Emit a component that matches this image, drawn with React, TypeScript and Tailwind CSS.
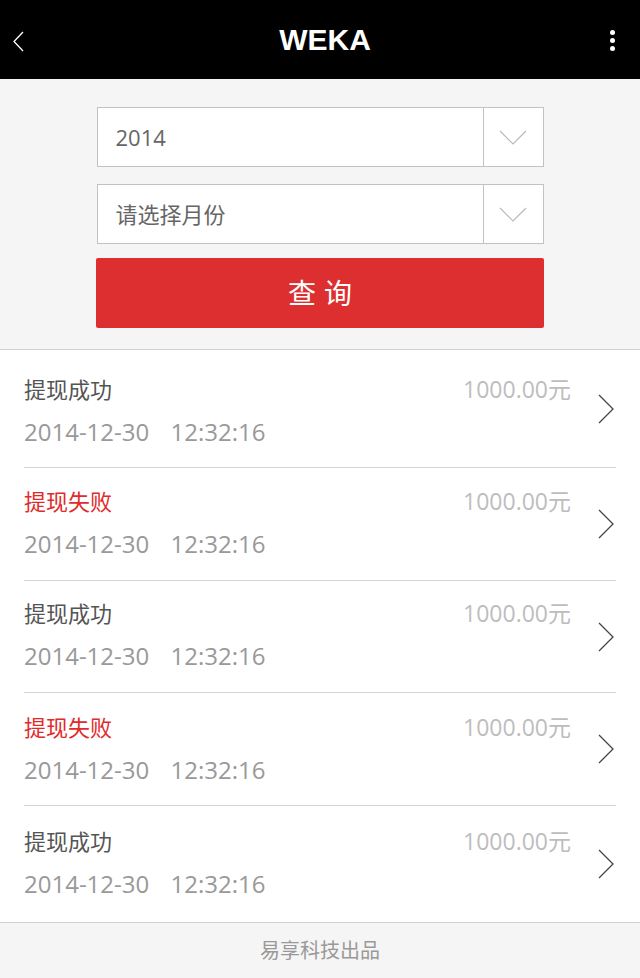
const records = [
  { ok: true, h: "h-[118px]", pt: "pt-[24px]" },
  { ok: false, h: "h-[113px]", pt: "pt-[18px]" },
  { ok: true, h: "h-[112px]", pt: "pt-[17px]" },
  { ok: false, h: "h-[113px]", pt: "pt-[19px]" },
  { ok: true, h: "h-[116px]", pt: "pt-[20px]" },
];

const Chevron = ({ className }: { className: string }) => (
  <svg className={className} viewBox="0 0 16 30" fill="none">
    <path d="M1 1 L15 15 L1 29" stroke="currentColor" strokeWidth="1.3" />
  </svg>
);

const SelectBox = ({ label }: { label: string }) => (
  <div className="flex h-[60px] w-[447px] border border-[#c2c2c2] bg-white">
    <div className="flex flex-1 items-center pl-[18px] text-[22px] text-[#666]">{label}</div>
    <div className="flex w-[60px] items-center justify-center border-l border-[#c2c2c2]">
      <svg width="28" height="15" viewBox="0 0 28 15" fill="none">
        <path d="M1 1 L14 14 L27 1" stroke="#b8b8b8" strokeWidth="1.2" />
      </svg>
    </div>
  </div>
);

export default function App() {
  return (
    <div className="flex h-[978px] w-full flex-col bg-white font-['Open_Sans','Noto_Sans_CJK_SC',sans-serif]">
      <header className="relative flex h-[79px] items-center justify-center bg-black pl-[10px]">
        <svg className="absolute left-[13px] top-[31px]" width="11" height="21" viewBox="0 0 11 21" fill="none">
          <path d="M10 1 L1 10.5 L10 20" stroke="white" strokeWidth="1.3" />
        </svg>
        <h1 className="font-['Liberation_Sans',sans-serif] text-[30px] font-bold text-white">WEKA</h1>
        <div className="absolute right-[25px] top-[30px] flex flex-col gap-[3px]">
          <span className="h-[5px] w-[5px] rounded-full bg-white" />
          <span className="h-[5px] w-[5px] rounded-full bg-white" />
          <span className="h-[5px] w-[5px] rounded-full bg-white" />
        </div>
      </header>

      <section className="flex h-[271px] flex-col items-center border-b border-[#d2d2d2] bg-[#f5f5f5] pt-[28px]">
        <SelectBox label="2014" />
        <div className="mt-[17px]">
          <SelectBox label="请选择月份" />
        </div>
        <button className="mt-[14px] h-[70px] w-[448px] rounded-[2px] bg-[#de2f30] pl-[8px] text-[28px] tracking-[8px] text-white">
          查询
        </button>
      </section>

      <ul className="flex flex-col">
        {records.map((r, i) => (
          <li
            key={i}
            className={`${r.h} relative mx-[24px] ${i < records.length - 1 ? "border-b border-[#d4d4d4]" : ""}`}
          >
            <div className={`flex items-start justify-between pr-[45px] ${r.pt}`}>
              <div className="flex flex-col">
                <span className={`h-[30px] text-[22px] leading-[30px] ${r.ok ? "text-[#555]" : "text-[#e12b2b]"}`}>
                  {r.ok ? "提现成功" : "提现失败"}
                </span>
                <span className="mt-[13px] h-[30px] text-[24px] leading-[30px] text-[#999] [word-spacing:15px]">
                  2014-12-30 12:32:16
                </span>
              </div>
              <span className="h-[30px] text-[23px] leading-[30px] text-[#bdbdbd]">1000.00元</span>
            </div>
            <Chevron className="absolute right-[2px] top-1/2 h-[30px] w-[16px] -translate-y-1/2 text-[#444]" />
          </li>
        ))}
      </ul>

      <footer className="flex flex-1 items-center justify-center border-t border-[#d2d2d2] bg-[#f5f5f5] text-[20px] text-[#999]">
        易享科技出品
      </footer>
    </div>
  );
}
